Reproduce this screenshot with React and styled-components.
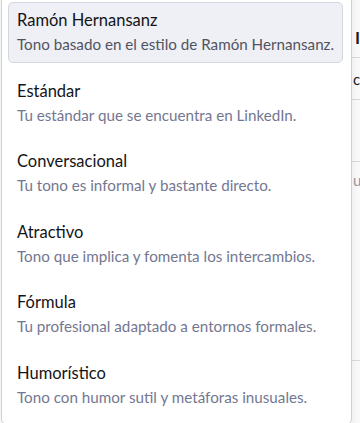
import React from "react";
import styled, { createGlobalStyle } from "styled-components";

const tones = [
  { title: "Ramón Hernansanz", text: "Tono basado en el estilo de Ramón Hernansanz." },
  { title: "Estándar", text: "Tu estándar que se encuentra en LinkedIn." },
  { title: "Conversacional", text: "Tu tono es informal y bastante directo." },
  { title: "Atractivo", text: "Tono que implica y fomenta los intercambios." },
  { title: "Fórmula", text: "Tu profesional adaptado a entornos formales." },
  { title: "Humorístico", text: "Tono con humor sutil y metáforas inusuales." },
];

export default function App() {
  return (
    <>
      <GlobalStyle />
      <Page>
        <Backdrop>
          <BackRow $height={58} $align="flex-end">
            <BackLabel $bold>Idioma</BackLabel>
          </BackRow>
          <BackRow $height={42}>
            <BackLabel>con</BackLabel>
          </BackRow>
          <BackRow $height={62} />
          <BackRow $height={199} $align="flex-start">
            <BackLabel $muted>us:</BackLabel>
          </BackRow>
          <BackRow $height={62} $last />
        </Backdrop>

        <Menu>
          {tones.map((tone, i) => (
            <Option key={tone.title} $active={i === 0}>
              <OptionTitle>{tone.title}</OptionTitle>
              <OptionText $active={i === 0}>{tone.text}</OptionText>
            </Option>
          ))}
        </Menu>
      </Page>
    </>
  );
}

const GlobalStyle = createGlobalStyle`
  html, body {
    margin: 0;
    padding: 0;
    background: #ffffff;
  }
  body {
    font-family: Lato, "Noto Sans", sans-serif;
    -webkit-font-smoothing: antialiased;
  }
`;

const Page = styled.div`
  position: relative;
  width: 360px;
  height: 423px;
  overflow: hidden;
`;

const Backdrop = styled.div`
  position: absolute;
  left: 352px;
  top: 0;
  width: 8px;
  height: 423px;
  overflow: hidden;
  background: #fafafa;
`;

const BackRow = styled.div`
  height: ${(p) => p.$height}px;
  box-sizing: border-box;
  border-bottom: ${(p) => (p.$last ? "none" : "1px solid #d9d9de")};
  display: flex;
  align-items: ${(p) => p.$align || "center"};
  padding: ${(p) => (p.$align === "flex-end" ? "0 0 10px" : p.$align === "flex-start" ? "9px 0 0" : "0")};
`;

const BackLabel = styled.span`
  padding-left: ${(p) => (p.$bold ? 3 : 1)}px;
  font-size: ${(p) => (p.$bold ? 17 : 15)}px;
  line-height: 18px;
  font-weight: ${(p) => (p.$bold ? 700 : 400)};
  color: ${(p) => (p.$muted ? "#9a9aa6" : "#1d1d22")};
  white-space: nowrap;
`;

const Menu = styled.div`
  position: absolute;
  left: 1px;
  top: -10px;
  width: 351px;
  box-sizing: border-box;
  padding: 11px 8px 8px 6px;
  display: flex;
  flex-direction: column;
  gap: 9.5px;
  background: #ffffff;
  border: 1px solid #cfd0d6;
  border-radius: 6px;
  box-shadow: 0 4px 10px rgba(0, 0, 0, 0.08);
`;

const Option = styled.div`
  padding: 8px 8px;
  border: 1px solid ${(p) => (p.$active ? "#d3d7e2" : "transparent")};
  border-radius: 5px;
  background: ${(p) => (p.$active ? "#eef0f6" : "transparent")};
  display: flex;
  flex-direction: column;
  gap: 5px;
`;

const OptionTitle = styled.div`
  font-size: 16.5px;
  line-height: 19px;
  color: #141418;
`;

const OptionText = styled.div`
  font-size: 15.2px;
  line-height: 19px;
  color: ${(p) => (p.$active ? "#52535e" : "#737791")};
  white-space: nowrap;
`;
